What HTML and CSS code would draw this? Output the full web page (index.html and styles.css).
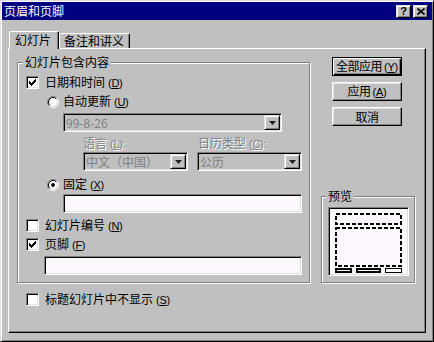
FILE: index.html
```html
<!DOCTYPE html>
<html lang="zh-CN">
<head>
<meta charset="utf-8">
<title>页眉和页脚</title>
<link rel="stylesheet" href="styles.css">
</head>
<body>
<div class="window">
  <div class="titlebar">
    <span class="title">页眉和页脚</span>
    <div class="cap-btns">
      <span class="cap-btn help">?</span>
      <span class="cap-btn close"><svg width="8" height="7" viewBox="0 0 8 7"><path d="M0.5 0.5 L7.5 6.5 M7.5 0.5 L0.5 6.5" stroke="#000" stroke-width="1.7" fill="none"/></svg></span>
    </div>
  </div>
  <div class="body">
    <div class="tabs">
      <div class="tab active">幻灯片</div>
      <div class="tab">备注和讲义</div>
    </div>
    <div class="panel">
      <div class="main">
        <div class="group content-group">
          <div class="group-title">幻灯片包含内容</div>

          <div class="opt r-date">
            <span class="cb"><svg width="11" height="11" viewBox="0 0 11 11"><path d="M2 4h1v3h-1z M3 5h1v3h-1z M4 6h1v3h-1z M5 5h1v3h-1z M6 4h1v3h-1z M7 3h1v3h-1z M8 2h1v3h-1z" fill="#000"/></svg></span>
            <span class="lbl">日期和时间<span class="acc">(<u>D</u>)</span></span>
          </div>

          <div class="opt r-auto">
            <svg class="radio" width="12" height="12" viewBox="0 0 12 12"><circle cx="6" cy="6" r="4.2" fill="#fff"/><path d="M2.11 9.89 A5.5 5.5 0 0 1 9.89 2.11" stroke="#808080" fill="none"/><path d="M9.89 2.11 A5.5 5.5 0 0 1 2.11 9.89" stroke="#fff" fill="none"/><path d="M2.82 9.18 A4.5 4.5 0 0 1 9.18 2.82" stroke="#000" fill="none"/><path d="M9.18 2.82 A4.5 4.5 0 0 1 2.82 9.18" stroke="#dfdfdf" fill="none"/></svg>
            <span class="lbl">自动更新<span class="acc">(<u>U</u>)</span></span>
          </div>

          <div class="combo combo-date">
            <span class="combo-text">99-8-26</span>
            <span class="drop"><svg width="7" height="4" viewBox="0 0 7 4"><path d="M0 0h7l-3.5 4z" fill="#202020"/></svg></span>
          </div>

          <div class="labels">
            <span class="dis lang">语言<span class="acc">(<u>L</u>):</span></span>
            <span class="dis">日历类型<span class="acc">(<u>C</u>):</span></span>
          </div>

          <div class="combos">
            <div class="combo combo-small">
              <span class="combo-text">中文（中国）</span>
              <span class="drop"><svg width="7" height="4" viewBox="0 0 7 4"><path d="M0 0h7l-3.5 4z" fill="#202020"/></svg></span>
            </div>
            <div class="combo combo-small">
              <span class="combo-text">公历</span>
              <span class="drop"><svg width="7" height="4" viewBox="0 0 7 4"><path d="M0 0h7l-3.5 4z" fill="#202020"/></svg></span>
            </div>
          </div>

          <div class="opt r-fixed">
            <svg class="radio" width="12" height="12" viewBox="0 0 12 12"><circle cx="6" cy="6" r="4.2" fill="#fff"/><path d="M2.11 9.89 A5.5 5.5 0 0 1 9.89 2.11" stroke="#808080" fill="none"/><path d="M9.89 2.11 A5.5 5.5 0 0 1 2.11 9.89" stroke="#fff" fill="none"/><path d="M2.82 9.18 A4.5 4.5 0 0 1 9.18 2.82" stroke="#000" fill="none"/><path d="M9.18 2.82 A4.5 4.5 0 0 1 2.82 9.18" stroke="#dfdfdf" fill="none"/><circle cx="6" cy="6" r="1.9" fill="#000"/></svg>
            <span class="lbl">固定<span class="acc">(<u>X</u>)</span></span>
          </div>

          <div class="field input-fixed"></div>

          <div class="opt r-num">
            <span class="cb"></span>
            <span class="lbl">幻灯片编号<span class="acc">(<u>N</u>)</span></span>
          </div>

          <div class="opt r-footer">
            <span class="cb"><svg width="11" height="11" viewBox="0 0 11 11"><path d="M2 4h1v3h-1z M3 5h1v3h-1z M4 6h1v3h-1z M5 5h1v3h-1z M6 4h1v3h-1z M7 3h1v3h-1z M8 2h1v3h-1z" fill="#000"/></svg></span>
            <span class="lbl">页脚<span class="acc">(<u>F</u>)</span></span>
          </div>

          <div class="field input-footer"></div>
        </div>

        <div class="side">
          <div class="btn default"><span class="btn-text">全部应用<span class="acc">(<u>Y</u>)</span></span></div>
          <div class="btn"><span class="btn-text">应用<span class="acc">(<u>A</u>)</span></span></div>
          <div class="btn"><span class="btn-text">取消</span></div>

          <div class="group preview-group">
            <div class="group-title preview-title">预览</div>
            <div class="preview-box">
              <svg width="79" height="67" viewBox="0 0 79 67">
                <rect x="7" y="6" width="65" height="10" fill="none" stroke="#000" stroke-width="2" stroke-dasharray="4 2"/>
                <rect x="7" y="20" width="65" height="38" fill="none" stroke="#000" stroke-width="2" stroke-dasharray="4 2"/>
                <rect x="6" y="60" width="17" height="5" fill="#000"/>
                <rect x="8" y="62" width="13" height="1" fill="#fff"/>
                <rect x="27" y="60" width="25" height="5" fill="#000"/>
                <rect x="29" y="62" width="21" height="1" fill="#fff"/>
                <rect x="56.5" y="60.5" width="16" height="4" fill="#fff" stroke="#000" stroke-width="1"/>
              </svg>
            </div>
          </div>
        </div>
      </div>

      <div class="opt r-title">
        <span class="cb"></span>
        <span class="lbl">标题幻灯片中不显示<span class="acc">(<u>S</u>)</span></span>
      </div>
    </div>
  </div>
</div>
</body>
</html>
```

FILE: styles.css
```css
* {
  box-sizing: border-box;
}

html, body {
  margin: 0;
  padding: 0;
}

body {
  width: 434px;
  height: 342px;
  overflow: hidden;
  background: #c0c0c0;
  font-family: "Noto Sans CJK SC", "Liberation Sans", sans-serif;
  font-size: 12px;
  color: #000;
}

u {
  text-decoration: underline;
  text-underline-offset: 1px;
}

.acc {
  margin-left: 3px;
  font-family: "Liberation Sans", "Noto Sans CJK SC", sans-serif;
  font-size: 11px;
  letter-spacing: -0.3px;
}

.window {
  width: 434px;
  height: 342px;
  background: #c0c0c0;
  border: 1px solid;
  border-color: #dfdfdf #000 #000 #dfdfdf;
  box-shadow: inset 1px 1px #fff, inset -1px -1px #808080;
  padding: 1px;
}

/* title bar */
.titlebar {
  height: 18px;
  background: #000080;
  color: #fff;
  display: flex;
  align-items: center;
  padding: 0 4px 0 2px;
}

.title {
  flex: 1;
  font-size: 12px;
  line-height: 18px;
}

.cap-btns {
  display: flex;
  gap: 2px;
}

.cap-btn {
  width: 15px;
  height: 13px;
  background: #c0c0c0;
  border: 1px solid;
  border-color: #dfdfdf #000 #000 #dfdfdf;
  box-shadow: inset 1px 1px #fff, inset -1px -1px #808080;
  display: flex;
  align-items: center;
  justify-content: center;
  color: #000;
}

.cap-btn.help {
  font-family: "Liberation Sans", sans-serif;
  font-weight: bold;
  font-size: 11px;
  line-height: 11px;
}

/* body + tabs */
.body {
  padding: 11px 6px 0 6px;
}

.tabs {
  display: flex;
  align-items: flex-start;
  height: 18px;
}

.tab {
  background: #c0c0c0;
  border-top: 1px solid #fff;
  border-left: 1px solid #fff;
  border-right: 1px solid #000;
  box-shadow: inset -1px 0 #808080;
  border-radius: 2px 2px 0 0;
  margin-top: 2px;
  width: 71px;
  height: 15px;
  padding-left: 4px;
  line-height: 14px;
}

.tab.active {
  position: relative;
  z-index: 1;
  margin-top: 0;
  margin-left: 1px;
  width: 50px;
  height: 18px;
  padding-left: 5px;
  line-height: 16px;
}

.panel {
  position: relative;
  width: 418px;
  height: 285px;
  margin-top: -1px;
  border: 1px solid;
  border-color: #fff #000 #000 #fff;
  box-shadow: inset -1px -1px #808080;
  padding: 8px 0 0 8px;
  display: flex;
  flex-direction: column;
}

.main {
  display: flex;
  align-items: flex-start;
}

/* group boxes */
.group {
  border: 1px solid #808080;
  box-shadow: 1px 1px #fff, inset 1px 1px #fff;
  display: flex;
  flex-direction: column;
  align-items: flex-start;
}

.group-title {
  margin: -8px 0 0 5px;
  padding: 0 2px;
  background: #c0c0c0;
  line-height: 14px;
  height: 14px;
}

.content-group {
  margin-top: 5px;
  width: 293px;
  height: 221px;
}

/* options */
.opt {
  display: flex;
  align-items: center;
  height: 13px;
  line-height: 13px;
  white-space: nowrap;
}

.opt .lbl {
  margin-left: 6px;
}

.r-date { margin: 7px 0 0 8px; }
.r-auto { margin: 6px 0 0 29px; }
.r-fixed { margin: 7px 0 0 29px; }
.r-num { margin: 6px 0 0 8px; }
.r-footer { margin: 6px 0 0 8px; }
.r-title { margin: 10px 0 0 9px; }

.r-auto .lbl,
.r-fixed .lbl {
  margin-left: 4px;
}

.cb {
  width: 13px;
  height: 13px;
  flex: none;
  background: #fff;
  border: 1px solid;
  border-color: #808080 #fff #fff #808080;
  box-shadow: inset 1px 1px #000, inset -1px -1px #dfdfdf;
}

.cb svg {
  display: block;
}

.radio {
  flex: none;
  display: block;
}

/* combos & fields */
.combo,
.field {
  height: 19px;
  border: 1px solid;
  border-color: #808080 #fff #fff #808080;
  box-shadow: inset 1px 1px #000, inset -1px -1px #dfdfdf;
}

.combo {
  display: flex;
  align-items: center;
  padding: 1px;
  background: #c0c0c0;
}

.combo-text {
  flex: 1;
  padding-left: 1px;
  color: #808080;
  line-height: 15px;
  white-space: nowrap;
  overflow: hidden;
}

.drop {
  width: 16px;
  height: 15px;
  flex: none;
  background: #c0c0c0;
  border: 1px solid;
  border-color: #dfdfdf #000 #000 #dfdfdf;
  box-shadow: inset 1px 1px #fff, inset -1px -1px #808080;
  display: flex;
  align-items: center;
  justify-content: center;
}

.drop svg {
  display: block;
}

.combo-date {
  margin: 5px 0 0 45px;
  width: 219px;
}

.labels {
  display: flex;
  margin: 4px 0 0 65px;
  height: 14px;
  line-height: 14px;
}

.dis {
  color: #808080;
  text-shadow: 1px 1px #fff;
  white-space: nowrap;
}

.dis.lang {
  width: 115px;
}

.combos {
  display: flex;
  gap: 9px;
  margin: 2px 0 0 65px;
}

.combo-small {
  width: 105px;
}

.field {
  background: #fdf8fd;
}

.input-fixed {
  margin: 3px 0 0 45px;
  width: 239px;
}

.input-footer {
  margin: 5px 0 0 26px;
  width: 258px;
}

/* side column */
.side {
  margin-left: 11px;
  width: 95px;
  display: flex;
  flex-direction: column;
  align-items: flex-start;
}

.btn {
  width: 70px;
  height: 19px;
  margin-left: 11px;
  margin-top: 6px;
  background: #c0c0c0;
  border: 1px solid;
  border-color: #fff #000 #000 #fff;
  box-shadow: inset -1px -1px #808080, inset 1px 1px #dfdfdf;
  display: flex;
  align-items: center;
  justify-content: center;
  overflow: visible;
}

.btn-text {
  flex: none;
  line-height: 17px;
  white-space: nowrap;
  letter-spacing: -0.5px;
}

.btn-text .acc {
  margin-left: 2px;
}

.btn.default {
  margin-top: 0;
  border-color: #000;
  box-shadow: inset 1px 1px #fff, inset -1px -1px #000, inset -2px -2px #808080;
}

.preview-group {
  margin-top: 70px;
  width: 94px;
  height: 87px;
}

.preview-title {
  margin-left: 4px;
}

.preview-box {
  margin: 4px 0 0 6px;
  width: 81px;
  height: 69px;
  background: #fdf8fd;
  border: 1px solid;
  border-color: #808080 #fff #fff #808080;
  box-shadow: inset 1px 1px #000, inset -1px -1px #dfdfdf;
}

.preview-box svg {
  display: block;
}
```
